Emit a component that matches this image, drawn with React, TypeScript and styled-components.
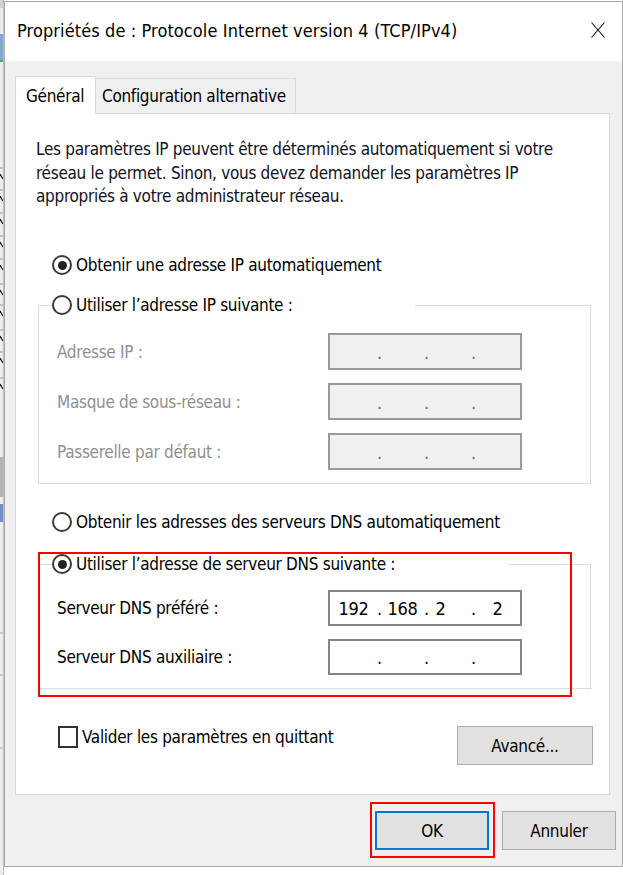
import React from "react";
import styled, { createGlobalStyle, css } from "styled-components";

const FONT = `"Liberation Sans Narrow", "Arial Narrow", "DejaVu Sans Condensed", "Liberation Sans", Arial, sans-serif`;

const GlobalStyle = createGlobalStyle`
  html, body { margin: 0; padding: 0; background: #ffffff; }
  body { font-family: ${FONT}; font-size: 17px; letter-spacing: -0.3px; color: #000; }
  * { box-sizing: border-box; }
`;

const Screen = styled.div`
  width: 623px;
  height: 875px;
  padding-top: 1px;
  display: flex;
  align-items: flex-start;
  overflow: hidden;
  background: #ffffff;
`;

const BehindStrip = styled.svg`
  flex: 0 0 4px;
  display: block;
  margin-top: -1px;
`;

const Dialog = styled.div`
  flex: 0 0 619px;
  width: 619px;
  height: 866px;
  border: 1px solid #a9a9a9;
  background: #f0f0f0;
  display: flex;
  flex-direction: column;
`;

const TitleBar = styled.div`
  height: 59px;
  flex: 0 0 59px;
  background: #ffffff;
  display: flex;
  align-items: center;
  justify-content: space-between;
  padding: 0 17px 2px 12px;
`;

const TitleText = styled.span`
  font-size: 18px;
  letter-spacing: 0.1px;
  color: #000;
  white-space: nowrap;
`;

const CloseIcon = styled.svg`
  display: block;
  margin-top: -2px;
`;

const Body = styled.div`
  flex: 1;
  display: flex;
  flex-direction: column;
`;

const Sheet = styled.div`
  margin: 15px 12px 0 10px;
  display: flex;
  flex-direction: column;
`;

const TabStrip = styled.div`
  display: flex;
  align-items: flex-end;
  height: 37px;
`;

const Tab = styled.div<{ $active?: boolean; $width: number; $pad: number }>`
  width: ${(p) => p.$width}px;
  display: flex;
  align-items: center;
  padding-left: ${(p) => p.$pad}px;
  white-space: nowrap;
  border: 1px solid #d9d9d9;
  border-bottom: none;
  ${(p) =>
    p.$active
      ? css`
          height: 38px;
          margin-bottom: -1px;
          background: #ffffff;
          position: relative;
          z-index: 1;
        `
      : css`
          height: 35px;
          border-left: none;
          background: #f0f0f0;
        `}
`;

const Panel = styled.div`
  height: 682px;
  background: #ffffff;
  border: 1px solid #d9d9d9;
  padding: 0 0 0 20px;
  display: flex;
  flex-direction: column;
`;

const Intro = styled.p`
  margin: 24px 0 0 0;
  line-height: 23.5px;
  color: #111122;
  white-space: nowrap;
`;

const OptionRow = styled.label<{ $top: number }>`
  display: flex;
  align-items: center;
  height: 24px;
  margin: ${(p) => p.$top}px 0 0 16px;
  white-space: nowrap;
  color: #000;
`;

const RadioCircle = styled.span<{ $checked?: boolean }>`
  width: 20px;
  height: 20px;
  flex: 0 0 20px;
  border-radius: 50%;
  border: 2px solid #3a3a3a;
  background: #ffffff;
  margin-right: 4px;
  display: flex;
  align-items: center;
  justify-content: center;
  &::after {
    content: "";
    width: 9px;
    height: 9px;
    border-radius: 50%;
    background: ${(p) => (p.$checked ? "#222222" : "transparent")};
  }
`;

const Group = styled.fieldset<{ $top: number; $pt: number }>`
  margin: ${(p) => p.$top}px 0 0 2px;
  width: 553px;
  min-inline-size: 0;
  border: 1px solid #dcdcdc;
  padding: ${(p) => p.$pt}px 0 13px 0;
  display: flex;
  flex-direction: column;
  gap: 13px;
`;

const GroupLegend = styled.legend<{ $width: number }>`
  margin-left: 13px;
  padding: 0;
  width: ${(p) => p.$width}px;
  height: 24px;
  display: flex;
  align-items: center;
  white-space: nowrap;
  background: #ffffff;
`;

const FieldRow = styled.div<{ $disabled?: boolean }>`
  display: flex;
  align-items: center;
  padding-left: 18px;
  color: ${(p) => (p.$disabled ? "#8f8f8f" : "#000")};
`;

const FieldLabel = styled.span`
  width: 271px;
  flex: 0 0 271px;
  white-space: nowrap;
`;

const IpBox = styled.div<{ $disabled?: boolean; $h: number }>`
  width: 194px;
  height: ${(p) => p.$h}px;
  border: 2px solid ${(p) => (p.$disabled ? "#9a9a9a" : "#858585")};
  background: ${(p) => (p.$disabled ? "#f0f0f0" : "#ffffff")};
  display: grid;
  grid-template-columns: 47px 4px 43px 4px 43px 4px 1fr;
  align-items: center;
  color: ${(p) => (p.$disabled ? "#6c6c80" : "#000")};
  font-size: 18px;
  line-height: 1;
`;

const IpPart = styled.span<{ $shift?: number }>`
  text-align: center;
  padding-top: 2px;
  padding-right: ${(p) => p.$shift ?? 0}px;
`;

const IpDot = styled.span`
  text-align: center;
  padding-top: 2px;
`;

const Annotated = styled.div`
  position: relative;
  margin-top: 18px;
  align-self: flex-start;
`;

const RedMark = styled.div<{ $l: number; $t: number; $w: number; $h: number }>`
  position: absolute;
  left: ${(p) => p.$l}px;
  top: ${(p) => p.$t}px;
  width: ${(p) => p.$w}px;
  height: ${(p) => p.$h}px;
  border: 2px solid #ff0000;
  pointer-events: none;
  z-index: 2;
`;

const BottomRow = styled.div`
  margin: 37px 0 0 22px;
  width: 535px;
  display: flex;
  justify-content: space-between;
  align-items: flex-start;
`;

const CheckOption = styled.label`
  display: flex;
  align-items: flex-start;
  white-space: nowrap;
`;

const CheckBox = styled.span`
  width: 20px;
  height: 22px;
  flex: 0 0 20px;
  border: 2px solid #333333;
  background: #ffffff;
  margin-right: 4px;
`;

const CheckText = styled.span`
  line-height: 22px;
`;

const Button = styled.button<{ $width: number; $default?: boolean }>`
  width: ${(p) => p.$width}px;
  height: 39px;
  font-family: ${FONT};
  font-size: 17px;
  letter-spacing: -0.3px;
  color: #000;
  background: #e1e1e1;
  border: ${(p) => (p.$default ? "2px solid #0078d7" : "1px solid #adadad")};
  padding: 0;
  margin: 0;
  display: flex;
  align-items: center;
  justify-content: center;
`;

const Footer = styled.div`
  display: flex;
  justify-content: flex-end;
  gap: 13px;
  margin-top: 16px;
  padding-right: 6px;
`;

const ButtonSlot = styled.div`
  position: relative;
`;

type IpProps = { parts: string[]; disabled?: boolean; h: number };

function IpField({ parts, disabled, h }: IpProps) {
  return (
    <IpBox $disabled={disabled} $h={h}>
      <IpPart>{parts[0]}</IpPart>
      <IpDot>.</IpDot>
      <IpPart>{parts[1]}</IpPart>
      <IpDot>.</IpDot>
      <IpPart $shift={parts[2] ? 18 : 0}>{parts[2]}</IpPart>
      <IpDot>.</IpDot>
      <IpPart>{parts[3]}</IpPart>
    </IpBox>
  );
}

const EMPTY = ["", "", "", ""];

export default function App() {
  return (
    <>
      <GlobalStyle />
      <Screen>
        <BehindStrip width="4" height="876" viewBox="0 0 4 876">
          <rect x="0" y="0" width="4" height="876" fill="#ececec" />
          <rect x="0" y="0" width="4" height="8" fill="#c9d3e0" />
          <rect x="0" y="34" width="3" height="26" fill="#7fa8d8" />
          <rect x="0" y="60" width="3" height="2" fill="#4caf50" />
          {[168, 190, 213, 236, 259, 284, 305, 330, 352, 378].map((y) => (
            <g key={y}>
              <line x1="0" y1={y} x2="4" y2={y} stroke="#9a9a9a" strokeWidth="1" />
              <line x1="0" y1={y + 6} x2="3" y2={y + 11} stroke="#111" strokeWidth="1.2" />
            </g>
          ))}
          <rect x="0" y="457" width="4" height="40" fill="#b4b4b4" />
          <rect x="0" y="504" width="3" height="18" fill="#6f8fd0" />
          <line x1="0" y1="633" x2="4" y2="633" stroke="#a8a8a8" />
          <line x1="0" y1="675" x2="4" y2="675" stroke="#a8a8a8" />
          <line x1="0" y1="748" x2="4" y2="748" stroke="#a8a8a8" />
          <rect x="3" y="0" width="1" height="876" fill="#bdbdbd" />
        </BehindStrip>
        <Dialog>
          <TitleBar>
            <TitleText>Propriétés de : Protocole Internet version 4 (TCP/IPv4)</TitleText>
            <CloseIcon width="14" height="16" viewBox="0 0 14 16">
              <line x1="0.5" y1="0.5" x2="13.5" y2="15.5" stroke="#111" strokeWidth="1.1" />
              <line x1="13.5" y1="0.5" x2="0.5" y2="15.5" stroke="#111" strokeWidth="1.1" />
            </CloseIcon>
          </TitleBar>
          <Body>
            <Sheet>
              <TabStrip>
                <Tab $active $width={81} $pad={10}>
                  Général
                </Tab>
                <Tab $width={200} $pad={6}>
                  Configuration alternative
                </Tab>
              </TabStrip>
              <Panel>
                <Intro>
                  Les paramètres IP peuvent être déterminés automatiquement si votre
                  <br />
                  réseau le permet. Sinon, vous devez demander les paramètres IP
                  <br />
                  appropriés à votre administrateur réseau.
                </Intro>

                <OptionRow $top={44.5}>
                  <RadioCircle $checked />
                  Obtenir une adresse IP automatiquement
                </OptionRow>

                <Group $top={16} $pt={16}>
                  <GroupLegend $width={363}>
                    <RadioCircle />
                    Utiliser l’adresse IP suivante :
                  </GroupLegend>
                  <FieldRow $disabled>
                    <FieldLabel>Adresse IP :</FieldLabel>
                    <IpField parts={EMPTY} disabled h={37} />
                  </FieldRow>
                  <FieldRow $disabled>
                    <FieldLabel>Masque de sous-réseau :</FieldLabel>
                    <IpField parts={EMPTY} disabled h={37} />
                  </FieldRow>
                  <FieldRow $disabled>
                    <FieldLabel>Passerelle par défaut :</FieldLabel>
                    <IpField parts={EMPTY} disabled h={37} />
                  </FieldRow>
                </Group>

                <OptionRow $top={26}>
                  <RadioCircle />
                  Obtenir les adresses des serveurs DNS automatiquement
                </OptionRow>

                <Annotated>
                  <Group $top={0} $pt={14}>
                    <GroupLegend $width={456}>
                      <RadioCircle $checked />
                      Utiliser l’adresse de serveur DNS suivante :
                    </GroupLegend>
                    <FieldRow>
                      <FieldLabel>Serveur DNS préféré :</FieldLabel>
                      <IpField parts={["192", "168", "2", "2"]} h={36} />
                    </FieldRow>
                    <FieldRow>
                      <FieldLabel>Serveur DNS auxiliaire :</FieldLabel>
                      <IpField parts={EMPTY} h={36} />
                    </FieldRow>
                  </Group>
                  <RedMark $l={2} $t={0} $w={534} $h={145} />
                </Annotated>

                <BottomRow>
                  <CheckOption>
                    <CheckBox />
                    <CheckText>Valider les paramètres en quittant</CheckText>
                  </CheckOption>
                  <Button $width={136}>Avancé...</Button>
                </BottomRow>
              </Panel>
            </Sheet>
            <Footer>
              <ButtonSlot>
                <Button $width={114} $default>
                  OK
                </Button>
                <RedMark $l={-5} $t={-9} $w={125} $h={56} />
              </ButtonSlot>
              <Button $width={114}>Annuler</Button>
            </Footer>
          </Body>
        </Dialog>
      </Screen>
    </>
  );
}
